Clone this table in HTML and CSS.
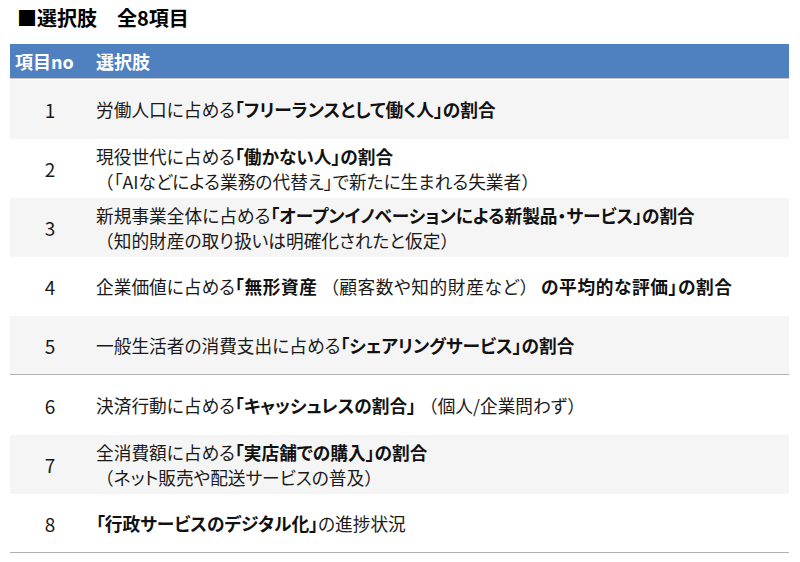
FILE: index.html
```html
<!DOCTYPE html>
<html lang="ja">
<head>
<meta charset="utf-8">
<title>選択肢</title>
<link rel="stylesheet" href="styles.css">
</head>
<body>
<div class="page">
  <h1 class="title">■選択肢　全8項目</h1>
  <div class="table">
    <div class="row head">
      <div class="no">項目no</div>
      <div class="txt">選択肢</div>
    </div>
    <div class="row alt">
      <div class="no num">1</div>
      <div class="txt"><p>労働人口に占める<b>「フリーランスとして働く人」の割合</b></p></div>
    </div>
    <div class="row">
      <div class="no num">2</div>
      <div class="txt"><p>現役世代に占める<b>「働かない人」の割合</b></p><p><span class="fw">（</span>「AIなどによる業務の代替え」で新たに生まれる失業者<span class="fw">）</span></p></div>
    </div>
    <div class="row alt">
      <div class="no num">3</div>
      <div class="txt"><p>新規事業全体に占める<b>「オープンイノベーションによる新製品・サービス」の割合</b></p><p><span class="fw">（</span>知的財産の取り扱いは明確化されたと仮定<span class="fw">）</span></p></div>
    </div>
    <div class="row">
      <div class="no num">4</div>
      <div class="txt"><p>企業価値に占める<b class="wide">「無形資産</b> <span class="fw">（</span><span class="wide">顧客数や知的財産など</span><span class="fw">）</span> <b class="wide">の平均的な評価」の割合</b></p></div>
    </div>
    <div class="row alt sep">
      <div class="no num">5</div>
      <div class="txt"><p>一般生活者の消費支出に占める<b>「シェアリングサービス」の割合</b></p></div>
    </div>
    <div class="row">
      <div class="no num">6</div>
      <div class="txt"><p>決済行動に占める<b>「キャッシュレスの割合」</b> <span class="fw">（</span>個人/企業問わず<span class="fw">）</span></p></div>
    </div>
    <div class="row alt">
      <div class="no num">7</div>
      <div class="txt"><p>全消費額に占める<b>「実店舗での購入」の割合</b></p><p><span class="fw">（</span>ネット販売や配送サービスの普及<span class="fw">）</span></p></div>
    </div>
    <div class="row sep">
      <div class="no num">8</div>
      <div class="txt"><p><b>「行政サービスのデジタル化」</b>の進捗状況</p></div>
    </div>
  </div>
</div>
</body>
</html>
```
FILE: styles.css
```css
* { box-sizing: border-box; }
html, body { margin: 0; padding: 0; background: #ffffff; }
body {
  font-family: "Noto Sans CJK JP", "Noto Sans", sans-serif;
  color: #1a1a1a;
}
.page {
  width: 800px;
  padding: 6px 11px 0 10px;
}
.title {
  margin: 0 0 14px 7px;
  font-size: 20px;
  line-height: 24px;
  font-weight: bold;
  color: #000;
}
.table {
  display: flex;
  flex-direction: column;
  width: 779px;
}
.row {
  display: flex;
  align-items: center;
  height: 59px;
  font-size: 17.7px;
  line-height: 25px;
}
.row.alt { background: #f5f5f5; }
.row.sep { border-bottom: 1px solid #b0b0b0; }
.row.sep + .row { margin-top: 1px; }
.row.head {
  height: 35px;
  background: #4f81c1;
  color: #ffffff;
  font-weight: bold;
  font-size: 18px;
  border-bottom: 1px solid #c6c6c6;
  margin-bottom: 1px;
}
.no {
  width: 80px;
  flex: none;
}
.head .no { padding-left: 5px; }
.num { text-align: center; font-size: 19px; }
.txt {
  padding-left: 6px;
  font-feature-settings: "palt";
}
.head .txt { font-feature-settings: normal; }
.txt p { margin: 0; }
.txt b { font-weight: bold; color: #111; }
.txt .fw { font-feature-settings: normal; }
.txt .wide { letter-spacing: 0.6px; }
```
